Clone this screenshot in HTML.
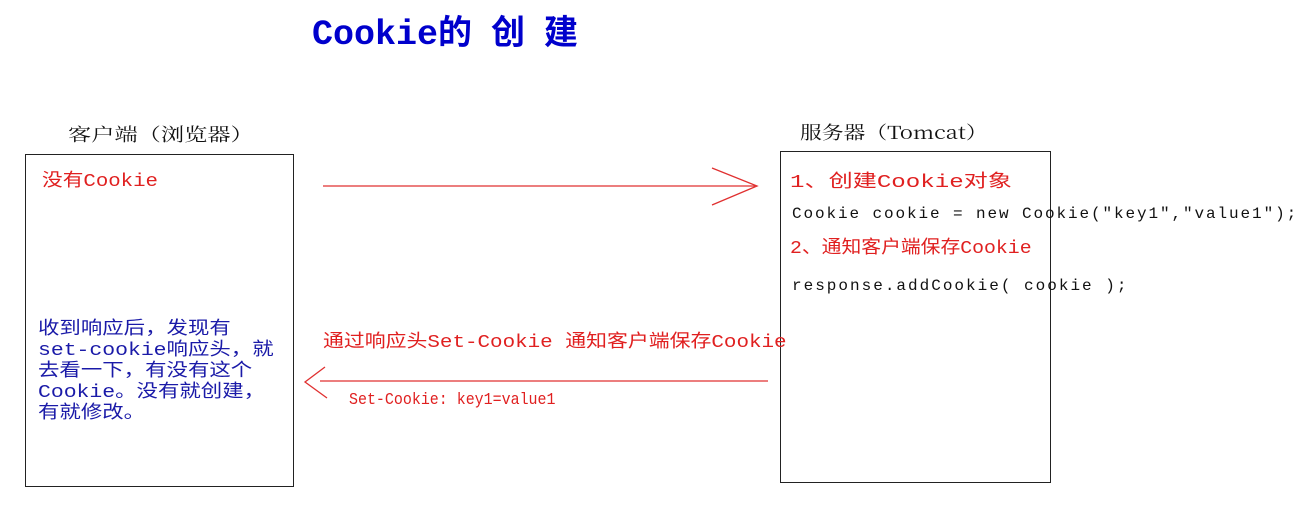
<!DOCTYPE html>
<html><head><meta charset="utf-8"><style>
body{margin:0;width:1311px;height:517px;background:#fff;position:relative;overflow:hidden;font-family:"Liberation Mono","Noto Sans CJK SC",monospace;}
.t{position:absolute;white-space:nowrap;font-size:18px;line-height:20px;transform-origin:0 50%;}
.box{position:absolute;border:1px solid #222;box-sizing:border-box;}
.r{color:#e02020}.b{color:#1a1aa8}.k{color:#111}
</style></head><body>
<div class="t" style="left:312px;top:8px;font-size:35px;line-height:44px;font-weight:bold;color:#0000cc;">Cookie<span style="font-family:'Noto Sans CJK SC',sans-serif;font-size:34px;letter-spacing:19px;">的创建</span></div>

<div class="t k" style="left:68px;top:124px;font-family:'Noto Serif CJK SC',serif;transform:scaleX(1.29);">客户端（浏览器）</div>
<div class="t k" style="left:800px;top:122px;font-family:'Noto Serif CJK SC',serif;transform:scaleX(1.21);">服务器（Tomcat）</div>

<div class="box" style="left:25px;top:154px;width:269px;height:333px;"></div>
<div class="box" style="left:780px;top:151px;width:271px;height:332px;"></div>

<div class="t r" style="left:42px;top:172px;transform:scaleX(1.15);">没有Cookie</div>

<div class="t b" style="left:38px;top:320px;line-height:21px;transform:scaleX(1.19);transform-origin:0 0;">收到响应后，发现有<br>set-cookie响应头，就<br>去看一下，有没有这个<br>Cookie。没有就创建，<br>有就修改。</div>

<div class="t r" style="left:790px;top:173px;transform:scaleX(1.34);">1、创建Cookie对象</div>
<div class="t k" style="left:792px;top:204px;font-size:16px;letter-spacing:1.9px;">Cookie cookie = new Cookie("key1","value1");</div>
<div class="t r" style="left:790px;top:239px;transform:scaleX(1.1);">2、通知客户端保存Cookie</div>
<div class="t k" style="left:792px;top:276px;font-size:16px;letter-spacing:2px;">response.addCookie( cookie );</div>

<div class="t r" style="left:323px;top:333px;transform:scaleX(1.16);">通过响应头Set-Cookie 通知客户端保存Cookie</div>
<div class="t r" style="left:349px;top:391px;font-size:17px;transform:scaleX(0.88);">Set-Cookie: key1=value1</div>

<svg width="1311" height="517" style="position:absolute;left:0;top:0">
<g stroke="#e03030" stroke-width="1.3" fill="none">
<line x1="323" y1="186" x2="755" y2="186"/>
<polyline points="712,168 757,186 712,205"/>
<line x1="320" y1="381" x2="768" y2="381"/>
<polyline points="325,367 305,382 327,398"/>
</g>
</svg>
</body></html>
